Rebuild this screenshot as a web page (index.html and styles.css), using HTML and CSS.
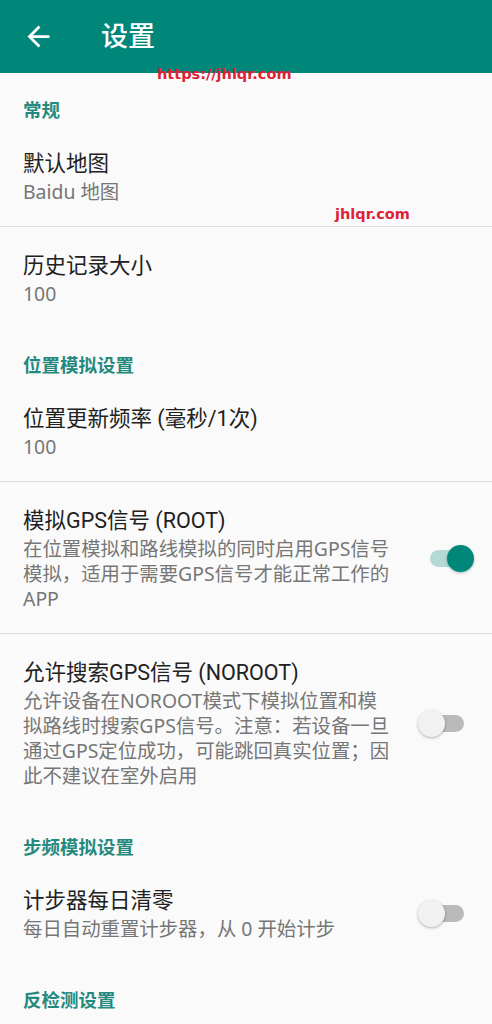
FILE: index.html
```html
<!DOCTYPE html>
<html lang="zh-CN">
<head>
<meta charset="utf-8">
<title>设置</title>
<link rel="stylesheet" href="styles.css">
</head>
<body>
<header class="toolbar">
  <svg class="back" viewBox="0 0 24 24" aria-hidden="true"><path d="M20 11H7.83l5.59-5.59L12 4l-8 8 8 8 1.41-1.41L7.83 13H20v-2z"/></svg>
  <h1 class="toolbar-title">设置</h1>
</header>

<main class="prefs">
  <section class="category">
    <h2 class="category-title">常规</h2>
    <div class="pref">
      <div class="pref-text">
        <div class="pref-title">默认地图</div>
        <div class="pref-summary">Baidu 地图</div>
      </div>
    </div>
    <div class="pref">
      <div class="pref-text">
        <div class="pref-title">历史记录大小</div>
        <div class="pref-summary">100</div>
      </div>
    </div>
  </section>

  <section class="category">
    <h2 class="category-title">位置模拟设置</h2>
    <div class="pref">
      <div class="pref-text">
        <div class="pref-title">位置更新频率 (毫秒/1次)</div>
        <div class="pref-summary">100</div>
      </div>
    </div>
    <div class="pref">
      <div class="pref-text">
        <div class="pref-title">模拟GPS信号 (ROOT)</div>
        <div class="pref-summary">在位置模拟和路线模拟的同时启用GPS信号模拟，适用于需要GPS信号才能正常工作的APP</div>
      </div>
      <span class="switch on"><span class="track"></span><span class="thumb"></span></span>
    </div>
    <div class="pref">
      <div class="pref-text">
        <div class="pref-title">允许搜索GPS信号 (NOROOT)</div>
        <div class="pref-summary">允许设备在NOROOT模式下模拟位置和模拟路线时搜索GPS信号。注意：若设备一旦通过GPS定位成功，可能跳回真实位置；因此不建议在室外启用</div>
      </div>
      <span class="switch"><span class="track"></span><span class="thumb"></span></span>
    </div>
  </section>

  <section class="category">
    <h2 class="category-title">步频模拟设置</h2>
    <div class="pref">
      <div class="pref-text">
        <div class="pref-title">计步器每日清零</div>
        <div class="pref-summary">每日自动重置计步器，从 0 开始计步</div>
      </div>
      <span class="switch"><span class="track"></span><span class="thumb"></span></span>
    </div>
  </section>

  <section class="category">
    <h2 class="category-title">反检测设置</h2>
  </section>
</main>

<span class="mark mark-url">https://jhlqr.com</span>
<span class="mark mark-site">jhlqr.com</span>
</body>
</html>
```

FILE: styles.css
```css
* {
  box-sizing: border-box;
}

html, body {
  margin: 0;
  padding: 0;
}

body {
  width: 492px;
  height: 1024px;
  overflow: hidden;
  position: relative;
  background: #fafafa;
  font-family: "Roboto", "Noto Sans CJK SC", sans-serif;
  color: #212121;
}

/* top app bar */
.toolbar {
  height: 73px;
  background: #00877a;
  display: flex;
  align-items: center;
  padding-left: 22px;
}

.back {
  width: 33px;
  height: 33px;
  fill: #ffffff;
  flex: none;
}

.toolbar-title {
  margin: 0 0 0 46px;
  font-size: 27px;
  font-weight: 500;
  color: #ffffff;
  line-height: 32px;
}

/* preference list */
.category-title {
  margin: 0;
  padding: 27px 23px 3px;
  font-size: 18.5px;
  line-height: 22px;
  font-weight: 700;
  color: #26897e;
}

.pref {
  display: flex;
  align-items: center;
  padding: 25px 18px 22px 23px;
}

.pref + .pref {
  border-top: 1px solid #dcdcdc;
}

.pref-text {
  flex: 0 1 368px;
  min-width: 0;
}

.pref-title {
  font-size: 21.5px;
  line-height: 28px;
  color: #212121;
}

.pref-summary {
  margin-top: 1px;
  font-family: "Noto Sans", "Noto Sans CJK SC", sans-serif;
  font-size: 19.4px;
  line-height: 25px;
  color: #767676;
}

/* switch widget */
.switch {
  position: relative;
  flex: none;
  margin-left: auto;
  width: 56px;
  height: 30px;
}

.switch .track {
  position: absolute;
  left: 10px;
  top: 6px;
  width: 36px;
  height: 17px;
  border-radius: 9px;
  background: #bababa;
}

.switch .thumb {
  position: absolute;
  left: 0;
  top: 1px;
  width: 27px;
  height: 27px;
  border-radius: 50%;
  background: #f1f1f1;
  box-shadow: 0 1px 3px rgba(0, 0, 0, 0.3);
}

.switch.on .track {
  left: 12px;
  background: #b5d9d4;
}

.switch.on .thumb {
  left: 29px;
  background: #00877a;
  box-shadow: 0 1px 3px rgba(0, 80, 70, 0.35);
}

/* site stamps laid over the page */
.mark {
  position: absolute;
  font-family: "DejaVu Sans", sans-serif;
  font-weight: 700;
  font-size: 14.5px;
  line-height: 16px;
  color: #dd2238;
  white-space: nowrap;
}

.mark-url {
  left: 157px;
  top: 66px;
}

.mark-site {
  left: 335px;
  top: 206px;
}
```
